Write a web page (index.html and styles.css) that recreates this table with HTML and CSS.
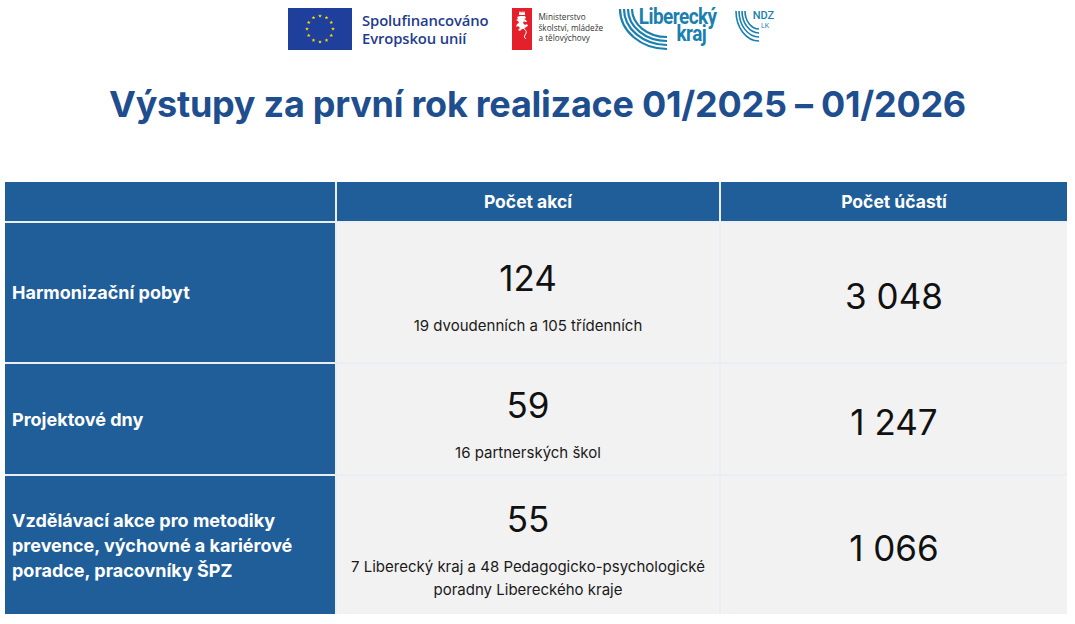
FILE: index.html
```html
<!DOCTYPE html>
<html lang="cs">
<head>
<meta charset="utf-8">
<title>Výstupy za první rok realizace</title>
<link rel="stylesheet" href="styles.css">
</head>
<body>
<header class="logos">
  <div class="eu">
    <svg class="eu-flag" width="64" height="42" viewBox="0 0 64 42">
      <defs>
        <polygon id="star" fill="#ffdd00" points="0,-2 0.47,-0.65 1.9,-0.62 0.76,0.25 1.18,1.62 0,0.8 -1.18,1.62 -0.76,0.25 -1.9,-0.62 -0.47,-0.65"/>
      </defs>
      <rect width="64" height="42" fill="#1f3f9c"/>
      <use href="#star" x="32" y="8"/>
      <use href="#star" x="38.5" y="9.74"/>
      <use href="#star" x="43.26" y="14.5"/>
      <use href="#star" x="45" y="21"/>
      <use href="#star" x="43.26" y="27.5"/>
      <use href="#star" x="38.5" y="32.26"/>
      <use href="#star" x="32" y="34"/>
      <use href="#star" x="25.5" y="32.26"/>
      <use href="#star" x="20.74" y="27.5"/>
      <use href="#star" x="19" y="21"/>
      <use href="#star" x="20.74" y="14.5"/>
      <use href="#star" x="25.5" y="9.74"/>
    </svg>
    <div class="eu-text">Spolufinancováno<br>Evropskou unií</div>
  </div>
  <div class="msmt">
    <svg class="msmt-flag" width="20" height="42" viewBox="0 0 20 42">
      <rect width="20" height="42" fill="#e4202a"/>
      <path fill="#fff" d="M7 5 L8 3 L9 5 L10 3 L11 5 L12 3 L13 5 L13 7 L7 7 Z M8 8 L13 8 L14 10 L12 11 L14 12 L15 14 L13 14 L12 13 L11 15 L13 17 L15 16 L16 18 L14 19 L12 21 L10 21 L8 23 L6 22 L8 20 L6 18 L4 19 L5 16 L7 15 L6 13 L4 12 L6 11 L5 9 Z"/>
      <path fill="none" stroke="#fff" stroke-width="1" d="M12 21 Q16 23 13 27 Q11 29 14 31"/>
    </svg>
    <div class="msmt-text">Ministerstvo<br>školství, mládeže<br>a tělovýchovy</div>
  </div>
  <div class="lk">
    <svg class="lk-arcs" width="52" height="44" viewBox="0 0 52 44">
      <g fill="none" stroke="#1b7fb0" stroke-width="2.2">
        <path d="M3 2 A47 40 0 0 0 50 42"/>
        <path d="M7 2 A43 36 0 0 0 50 38"/>
        <path d="M11 2 A39 32 0 0 0 50 34"/>
        <path d="M15 2 A35 28 0 0 0 50 30"/>
      </g>
    </svg>
    <div class="lk-text"><span class="lk-top">Liberecký</span><span class="lk-bottom">kraj</span></div>
  </div>
  <div class="ndz">
    <svg class="ndz-arcs" width="26" height="34" viewBox="0 0 26 34">
      <g fill="none" stroke="#1b7fb0" stroke-width="1.6">
        <path d="M2 2 A23 30 0 0 0 25 32"/>
        <path d="M5 2 A20 26 0 0 0 25 28"/>
        <path d="M8 2 A17 22 0 0 0 25 24"/>
        <path d="M11 2 A14 18 0 0 0 25 20"/>
      </g>
    </svg>
    <div class="ndz-text"><span class="ndz-big">NDZ</span><span class="ndz-small">LK</span></div>
  </div>
</header>

<h1 class="title">Výstupy za první rok realizace 01/2025 – 01/2026</h1>

<section class="table">
  <div class="th"></div>
  <div class="th">Počet akcí</div>
  <div class="th">Počet účastí</div>

  <div class="label">Harmonizační pobyt</div>
  <div class="cell actions">
    <div class="num">124</div>
    <div class="sub">19 dvoudenních a 105 třídenních</div>
  </div>
  <div class="cell total"><div class="num">3 048</div></div>

  <div class="label">Projektové dny</div>
  <div class="cell actions">
    <div class="num">59</div>
    <div class="sub">16 partnerských škol</div>
  </div>
  <div class="cell total"><div class="num">1 247</div></div>

  <div class="label">Vzdělávací akce pro metodiky prevence, výchovné a kariérové poradce, pracovníky ŠPZ</div>
  <div class="cell actions">
    <div class="num">55</div>
    <div class="sub">7 Liberecký kraj a 48 Pedagogicko-psychologické<br>poradny Libereckého kraje</div>
  </div>
  <div class="cell total"><div class="num">1 066</div></div>
</section>
</body>
</html>
```

FILE: styles.css
```css
* { box-sizing: border-box; }

body {
  margin: 0;
  background: #ffffff;
  font-family: Inter, "Noto Sans", "Liberation Sans", sans-serif;
  color: #111111;
}

/* ---------- logos ---------- */
.logos {
  display: flex;
  align-items: flex-start;
  padding: 8px 0 0 288px;
  height: 50px;
}

.eu {
  display: flex;
  align-items: center;
  gap: 10px;
}
.eu-flag { display: block; }
.eu-text {
  font-family: "Open Sans", "Noto Sans", sans-serif;
  font-weight: 600;
  font-size: 14.8px;
  line-height: 18px;
  color: #1f3c8c;
  letter-spacing: -0.1px;
}

.msmt {
  display: flex;
  align-items: center;
  gap: 6px;
  margin-left: 24px;
}
.msmt-flag { display: block; }
.msmt-text {
  font-family: "Open Sans", "Noto Sans", sans-serif;
  font-size: 8.2px;
  line-height: 10.5px;
  color: #333333;
  padding-bottom: 2px;
}

.lk {
  display: grid;
  margin-left: 14px;
  width: 100px;
  height: 44px;
}
.lk > * { grid-area: 1 / 1; }
.lk-arcs { display: block; margin-top: -1px; }
.lk-text {
  display: flex;
  flex-direction: column;
  align-items: flex-end;
  padding-right: 1px;
  font-family: Roboto, "Liberation Sans", sans-serif;
  font-weight: 700;
  font-size: 22px;
  color: #1b7fb0;
  letter-spacing: -0.6px;
}
.lk-top, .lk-bottom {
  display: block;
  height: 17px;
  line-height: 17px;
  transform: scaleX(0.86);
  transform-origin: right;
}
.lk-bottom { padding-right: 12px; }

.ndz {
  display: grid;
  margin-left: 17px;
  width: 40px;
  height: 36px;
  margin-top: 1px;
}
.ndz > * { grid-area: 1 / 1; }
.ndz-arcs { display: block; }
.ndz-text {
  display: flex;
  flex-direction: column;
  align-items: flex-end;
  font-family: Roboto, "Liberation Sans", sans-serif;
  color: #1b7fb0;
  padding-top: 1px;
}
.ndz-big { font-size: 11px; font-weight: 500; line-height: 12px; }
.ndz-small { font-size: 7px; line-height: 9px; padding-right: 5px; }

/* ---------- title ---------- */
.title {
  margin: 32px 0 0;
  text-align: center;
  font-size: 36px;
  line-height: 44px;
  font-weight: 700;
  color: #1f4e8f;
  letter-spacing: -0.25px;
}

/* ---------- table ---------- */
.table {
  display: grid;
  grid-template-columns: 330px 382px 346px;
  grid-template-rows: 39px 139px 110px 138px;
  gap: 2px;
  width: 1062px;
  margin: 56px 0 0 5px;
  background: #e9eff5;
}

.th {
  background: #205e99;
  color: #ffffff;
  font-weight: 700;
  font-size: 17.5px;
  display: flex;
  align-items: center;
  justify-content: center;
}

.label {
  background: #205e99;
  color: #ffffff;
  font-weight: 700;
  font-size: 18px;
  line-height: 25px;
  padding: 0 20px 0 7px;
  display: flex;
  align-items: center;
}

.cell {
  background: #f2f2f2;
  display: flex;
  flex-direction: column;
  align-items: center;
  justify-content: center;
  text-align: center;
}
.cell.actions { padding-top: 10px; }
.cell.total { padding-top: 6px; }

.num {
  font-size: 35px;
  line-height: 40px;
  font-weight: 400;
  color: #111111;
}
.sub {
  margin-top: 16px;
  font-size: 15px;
  line-height: 23px;
  color: #1a1a1a;
  white-space: nowrap;
}
```
